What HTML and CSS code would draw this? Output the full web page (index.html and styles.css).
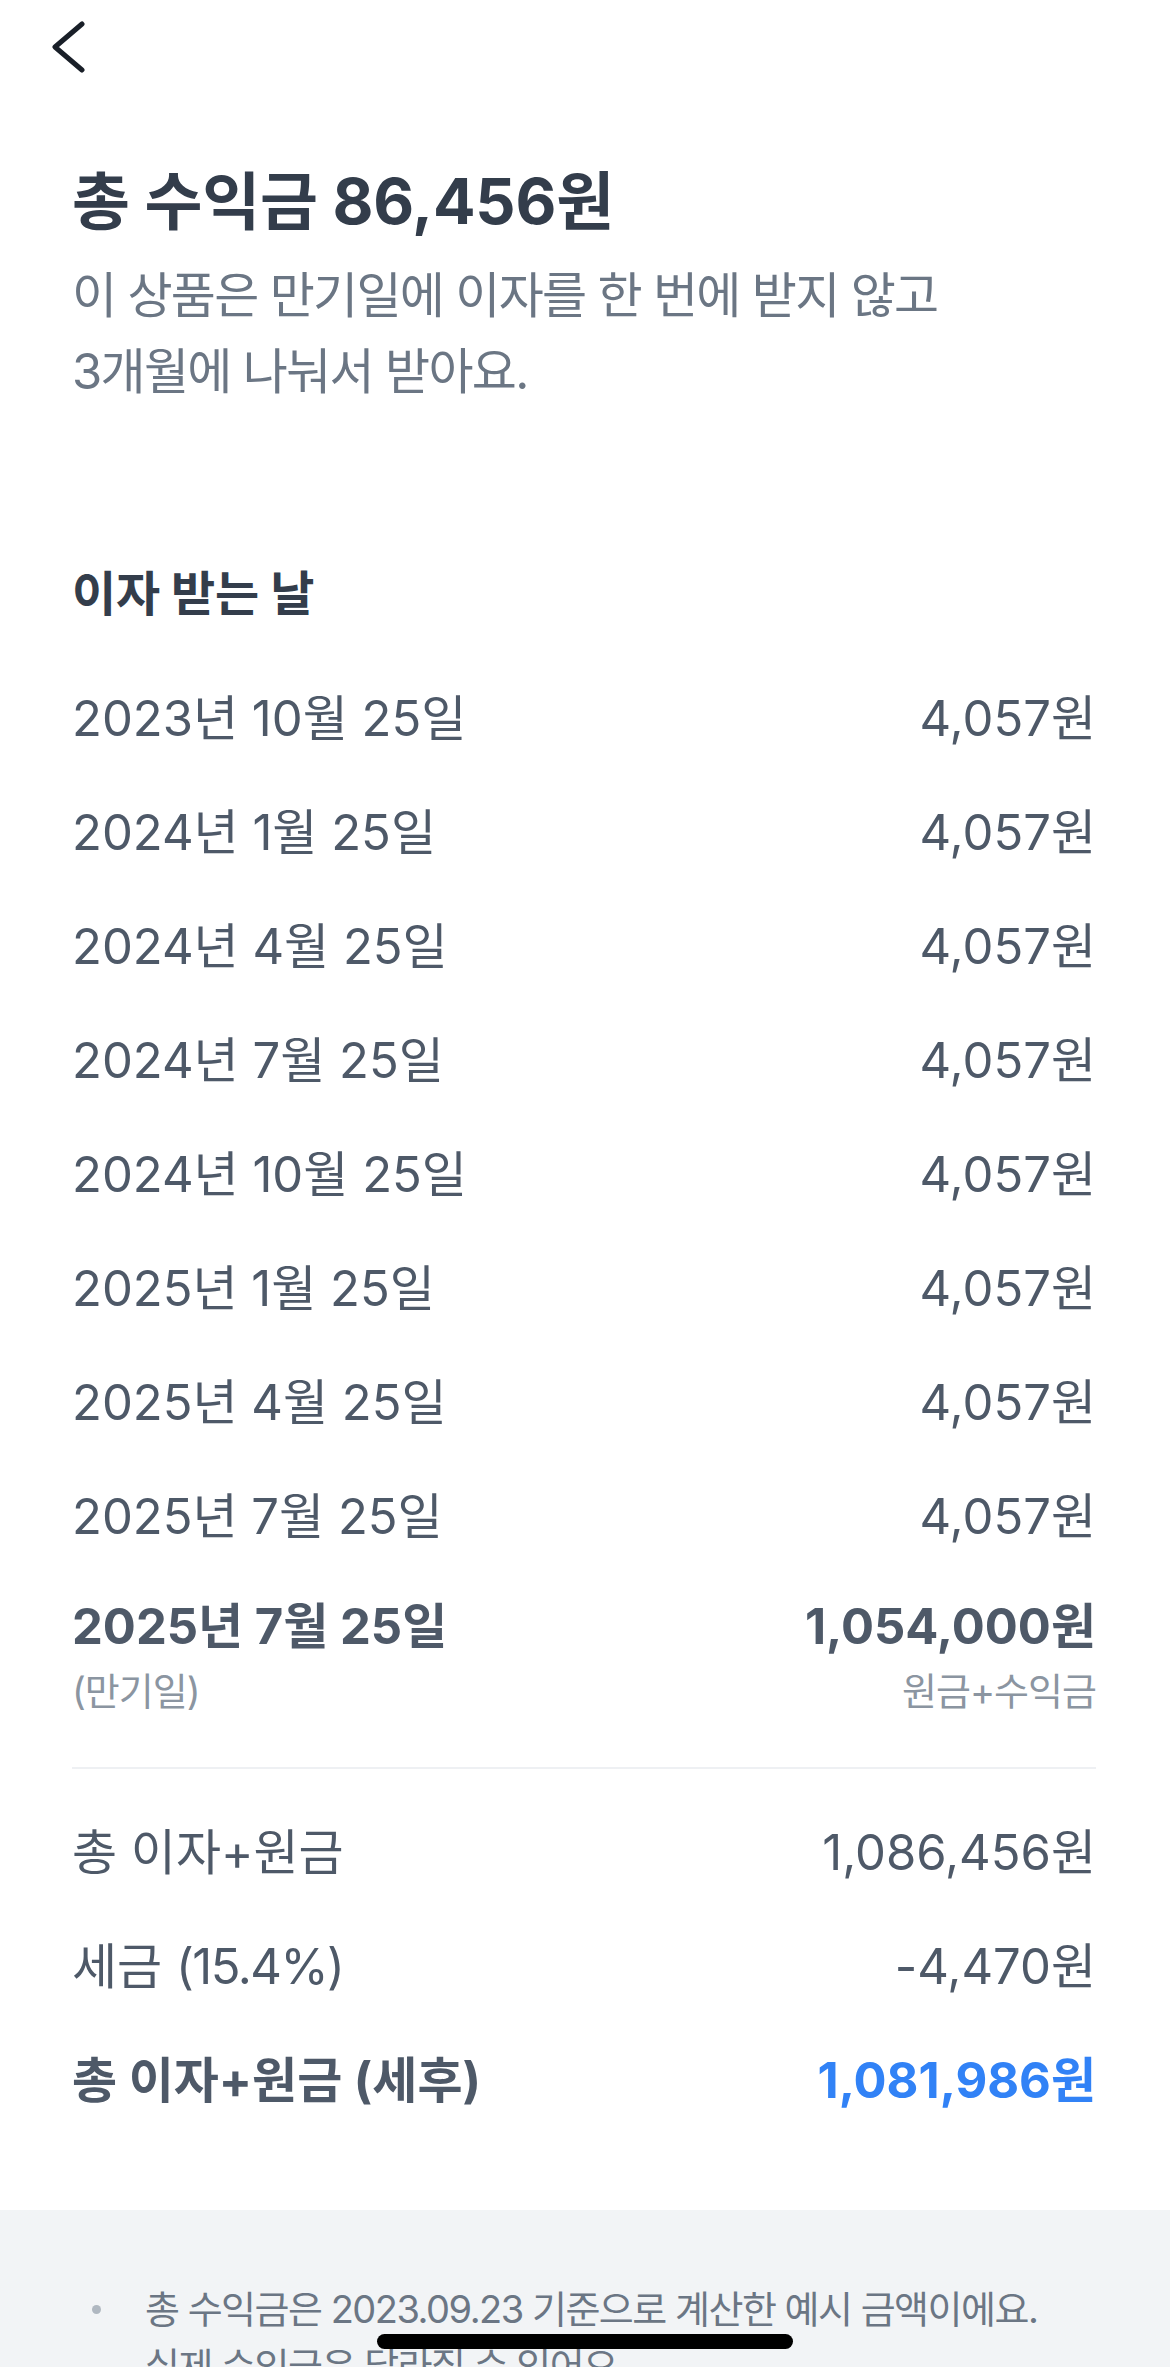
FILE: index.html
```html
<!DOCTYPE html>
<html lang="ko">
<head>
<meta charset="utf-8">
<title>총 수익금</title>
<link rel="stylesheet" href="styles.css">
</head>
<body>
<div class="page">
  <header class="nav">
    <button class="back" aria-label="뒤로">
      <svg width="34" height="54" viewBox="0 0 34 54"><polyline points="30,3 3,26 30,49" fill="none" stroke="#191f28" stroke-width="5" stroke-linecap="round" stroke-linejoin="round"/></svg>
    </button>
  </header>

  <section class="hero">
    <h1 class="title">총 수익금 86,456원</h1>
    <p class="desc">이 상품은 만기일에 이자를 한 번에 받지 않고<br>3개월에 나눠서 받아요.</p>
  </section>

  <section class="schedule">
    <h2 class="section-title">이자 받는 날</h2>
    <div class="list">
      <div class="row"><span>2023년 10월 25일</span><span>4,057원</span></div>
      <div class="row"><span>2024년 1월 25일</span><span>4,057원</span></div>
      <div class="row"><span>2024년 4월 25일</span><span>4,057원</span></div>
      <div class="row"><span>2024년 7월 25일</span><span>4,057원</span></div>
      <div class="row"><span>2024년 10월 25일</span><span>4,057원</span></div>
      <div class="row"><span>2025년 1월 25일</span><span>4,057원</span></div>
      <div class="row"><span>2025년 4월 25일</span><span>4,057원</span></div>
      <div class="row"><span>2025년 7월 25일</span><span>4,057원</span></div>
      <div class="row final">
        <div class="col"><span class="main">2025년 7월 25일</span><span class="sub">(만기일)</span></div>
        <div class="col right"><span class="main">1,054,000원</span><span class="sub">원금+수익금</span></div>
      </div>
    </div>
    <div class="divider"></div>
    <div class="summary">
      <div class="row"><span>총 이자+원금</span><span>1,086,456원</span></div>
      <div class="row"><span>세금 <span class="tight">(15.4%)</span></span><span>-4,470원</span></div>
      <div class="row total"><span>총 이자+원금 (세후)</span><span class="blue">1,081,986원</span></div>
    </div>
  </section>

  <section class="notes">
    <ul class="note-list">
      <li>총 수익금은 2023.09.23 기준으로 계산한 예시 금액이에요.<br>실제 수익금은 달라질 수 있어요.</li>
    </ul>
  </section>

  <div class="home-indicator"></div>
</div>
</body>
</html>
```
FILE: styles.css
```css
* { box-sizing: border-box; }
html, body { margin: 0; padding: 0; }
body {
  background: #ffffff;
  font-family: Inter, "Noto Sans CJK KR", "Noto Sans", sans-serif;
}
.page {
  position: relative;
  width: 1170px;
  height: 2367px;
  overflow: hidden;
  display: flex;
  flex-direction: column;
}
.nav {
  height: 100px;
  padding: 21px 0 0 52px;
  display: flex;
  align-items: flex-start;
}
.back {
  border: 0;
  background: none;
  padding: 0;
  margin: 0;
  display: block;
  line-height: 0;
}
.hero {
  padding: 86px 74px 0 72px;
}
.title {
  margin: 0;
  font-size: 63px;
  font-weight: 700;
  line-height: 80px;
  color: #333d4b;
  letter-spacing: -0.2px;
}
.desc {
  margin: 17px 0 0;
  font-size: 49px;
  line-height: 76px;
  color: #6b7684;
  letter-spacing: -1.7px;
  white-space: nowrap;
}
.schedule {
  padding: 0 74px 0 72px;
}
.section-title {
  margin: 149px 0 0;
  font-size: 48px;
  font-weight: 700;
  line-height: 70px;
  color: #333d4b;
  letter-spacing: -0.2px;
}
.list {
  margin-top: 28px;
}
.row {
  display: flex;
  justify-content: space-between;
  align-items: center;
  height: 114px;
  font-size: 49px;
  color: #4e5968;
  letter-spacing: 0;
  white-space: nowrap;
}
.row.final {
  height: auto;
  align-items: flex-start;
  padding-top: 23px;
}
.col {
  display: flex;
  flex-direction: column;
  align-items: flex-start;
}
.col.right {
  align-items: flex-end;
}
.main {
  font-weight: 700;
  line-height: 70px;
}
.sub {
  margin-top: 4px;
  font-size: 38px;
  line-height: 50px;
  color: #8b95a1;
  letter-spacing: -1px;
}
.divider {
  margin-top: 51px;
  height: 2px;
  background: #eef0f3;
}
.summary {
  margin-top: 22px;
}
.tight {
  letter-spacing: -1.5px;
}
.row.total {
  font-weight: 700;
}
.blue {
  color: #3182f6;
}
.notes {
  margin-top: 77px;
  flex: 1;
  background: #f2f4f6;
  padding: 71px 74px 0 95px;
}
.note-list {
  list-style: none;
  margin: 0;
  padding: 0;
}
.note-list li {
  position: relative;
  padding-left: 50px;
  font-size: 38px;
  line-height: 57px;
  color: #6b7684;
  letter-spacing: -1.5px;
  white-space: nowrap;
}
.note-list li::before {
  content: "";
  position: absolute;
  left: -3px;
  top: 24px;
  width: 9px;
  height: 9px;
  border-radius: 50%;
  background: #b0b8c1;
}
.home-indicator {
  position: absolute;
  left: 377px;
  top: 2334px;
  width: 416px;
  height: 15px;
  border-radius: 8px;
  background: #000000;
}
```
